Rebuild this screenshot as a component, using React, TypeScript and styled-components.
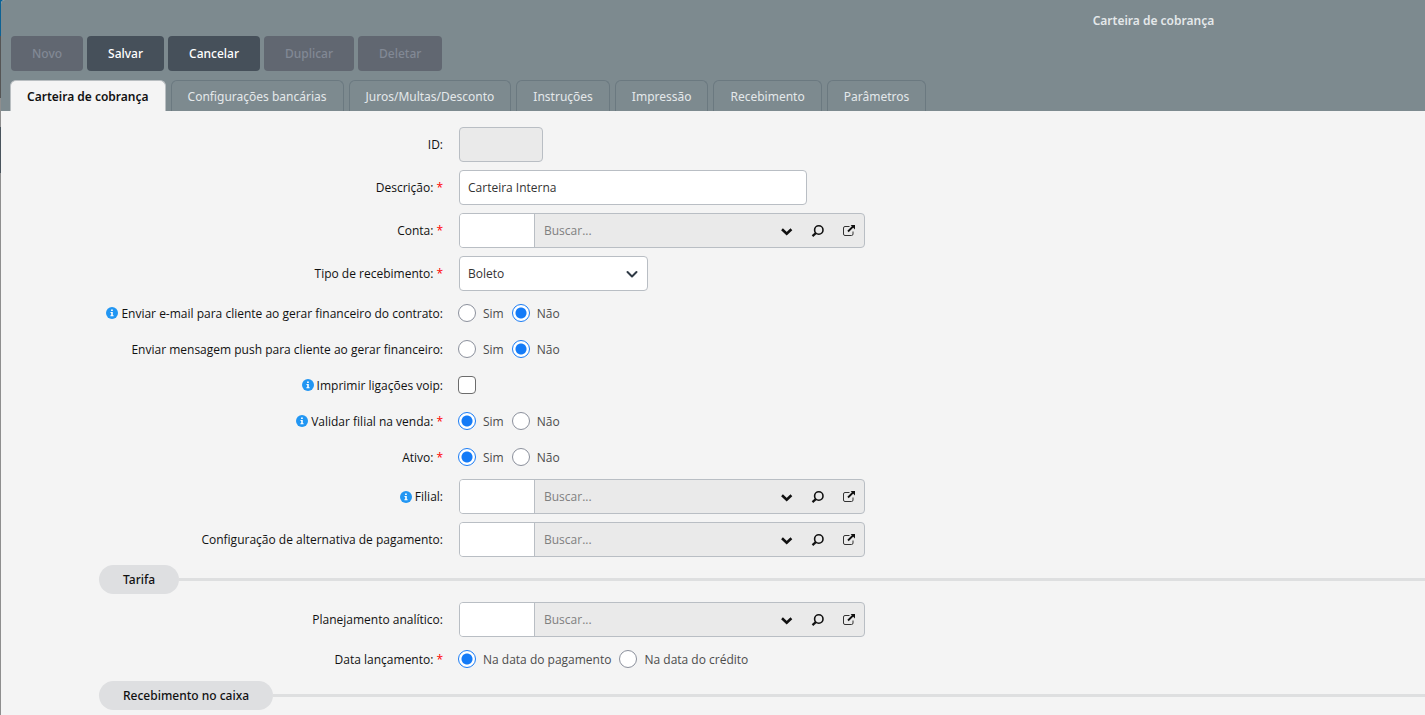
import React, { useId, useState } from 'react';
import styled, { createGlobalStyle, css } from 'styled-components';

const Global = createGlobalStyle`
  *, *::before, *::after { box-sizing: border-box; }
  body {
    margin: 0;
    background: #8e8e8e;
    font-family: "Open Sans", "Noto Sans", sans-serif;
    font-size: 12px;
    line-height: 17px;
    color: #111;
  }
  button, input, select { font: inherit; }
`;

const notoSans = css`
  font-family: "Noto Sans", "Open Sans", sans-serif;
`;

const Backdrop = styled.div`
  min-height: 100vh;
  padding-left: 1px;
  background: linear-gradient(#0d6294 0 36px, #555 36px 98px, #8e8e8e 98px 127px, #48535c 127px 173px, #8e8e8e 173px);
`;

const Window = styled.main`
  min-height: 100vh;
  background: #f4f4f4;
  border-top-left-radius: 4px;
`;

const Header = styled.header`
  display: flex;
  flex-direction: column;
  background: #7d8a8f;
  border-top-left-radius: 4px;
`;

const Title = styled.h1`
  ${notoSans}
  margin: 0;
  padding: 12px 2px 7px 62%;
  font-size: 12px;
  line-height: 17px;
  font-weight: 600;
  text-align: center;
  color: #e4e8ea;
`;

const Toolbar = styled.div`
  display: flex;
  gap: 4px;
  padding: 0 10px 9px;
`;

const ToolButton = styled.button`
  ${notoSans}
  height: 35px;
  padding: 0 21px;
  border: 0;
  border-radius: 4px;
  background: #46505a;
  color: #fff;
  font-weight: 500;
  &:disabled {
    background: #616771;
    color: #828995;
  }
`;

const Tabs = styled.nav`
  display: flex;
  gap: 5px;
  padding: 0 9px;
`;

const Tab = styled.button<{ $active: boolean }>`
  ${notoSans}
  height: 31px;
  padding: 0 16px;
  border: 1px solid #6b7980;
  border-bottom: 0;
  border-radius: 6px 6px 0 0;
  background: transparent;
  color: #e4e8ea;
  ${p => p.$active && css`
    background: #f4f4f4;
    border-color: #b9bec1;
    color: #111;
    font-weight: 600;
  `}
`;

const Form = styled.form`
  display: flex;
  flex-direction: column;
  gap: 8px;
  padding: 16px 0 5px;
`;

const Row = styled.div`
  display: grid;
  grid-template-columns: 442px 1fr;
  gap: 15px;
  align-items: center;
  min-height: 28px;
`;

const LabelCell = styled.div`
  display: flex;
  justify-content: flex-end;
  align-items: center;
  gap: 3px;
`;

const Star = styled.span`
  color: #f00;
`;

const field = css`
  height: 35px;
  margin: 0 0 0 1px;
  border: 1px solid #b9bec4;
  border-radius: 4px;
  background: #fff;
  color: #333;
`;

const TextInput = styled.input<{ $width: number }>`
  ${field}
  display: block;
  width: ${p => p.$width}px;
  padding: 0 8px;
  outline: 0;
  &:disabled { background: #eaeaea; }
`;

const Lookup = styled.div`
  ${field}
  display: flex;
  align-items: center;
  width: 406px;
  padding-right: 7px;
  background: #eaeaea;
  overflow: hidden;
`;

const CodeInput = styled.input`
  width: 75px;
  height: 100%;
  padding: 0 8px;
  border: 0;
  border-right: 1px solid #b9bec4;
  background: #fff;
  outline: 0;
`;

const SearchInput = styled.input`
  flex: 1;
  min-width: 0;
  height: 100%;
  padding: 0 9px;
  border: 0;
  background: transparent;
  outline: 0;
  &::placeholder { color: #808080; opacity: 1; }
`;

const IconGroup = styled.div`
  display: flex;
  gap: 15px;
`;

const IconButton = styled.button`
  display: flex;
  padding: 0;
  border: 0;
  background: none;
  color: #111;
`;

const SelectWrap = styled.div`
  display: grid;
  align-items: center;
  width: 190px;
  > * { grid-area: 1 / 1; }
  > svg {
    justify-self: end;
    margin-right: 8px;
    pointer-events: none;
  }
`;

const Select = styled.select`
  ${field}
  appearance: none;
  padding: 0 8px;
  outline: 0;
`;

const Options = styled.div`
  display: flex;
  gap: 8px;
`;

const Option = styled.label`
  display: flex;
  align-items: center;
  gap: 7px;
  color: #4c4c4c;
`;

const Radio = styled.input`
  appearance: none;
  width: 18px;
  height: 18px;
  margin: 0;
  border: 1px solid #8b909c;
  border-radius: 50%;
  background: #fff;
  &:checked {
    border-color: #1a7cf5;
    background: radial-gradient(circle, #147bf7 0 5px, #fff 6px);
  }
`;

const Check = styled.input`
  appearance: none;
  display: block;
  width: 18px;
  height: 18px;
  margin: 0;
  border: 1px solid #6c6c6c;
  border-radius: 4px;
  background: #fff;
  &:checked { background: #147bf7; }
`;

const Section = styled.div`
  display: flex;
  align-items: center;
  padding-left: 98px;
  &::after {
    content: "";
    flex: 1;
    height: 3px;
    background: #dedfe0;
  }
`;

const SectionTitle = styled.h2`
  ${notoSans}
  margin: 0;
  padding: 0 24px;
  border-radius: 15px;
  background: #dedfe1;
  font-size: 12px;
  font-weight: 500;
  line-height: 29px;
`;

const InfoIcon = () => (
  <svg width="12" height="12" viewBox="0 0 12 12" aria-hidden="true">
    <circle cx="6" cy="6" r="6" fill="#2196f3" />
    <path d="M5.1 2.5h1.7V4H5.1zM4.5 5h2.3v3.2h.8v1H4.4v-1h.8V6h-.7z" fill="#fff" />
  </svg>
);

const ChevronBold = () => (
  <svg width="16" height="16" viewBox="0 0 16 16" fill="none" stroke="currentColor" strokeWidth="2.6">
    <path d="M3 6.2 7.7 10.6 12.4 6.2" />
  </svg>
);

const Magnifier = () => (
  <svg width="16" height="16" viewBox="0 0 16 16" fill="none" stroke="currentColor">
    <circle cx="8.8" cy="7" r="4.2" strokeWidth="1.6" />
    <path d="m5.8 10.1-3.3 3" strokeWidth="2.2" />
  </svg>
);

const OpenExternal = () => (
  <svg width="16" height="16" viewBox="0 0 16 16" fill="none" stroke="currentColor">
    <path d="M8.5 3.5H4A1.5 1.5 0 0 0 2.5 5v6A1.5 1.5 0 0 0 4 12.5h6.5A1.5 1.5 0 0 0 12 11V8.5" strokeWidth="1" stroke="#333" />
    <path d="m7 8.5 5.5-5.5" strokeWidth="1.8" />
    <path d="M9.6 2H14v4.4z" fill="currentColor" stroke="none" />
  </svg>
);

const ChevronThin = () => (
  <svg width="16" height="16" viewBox="0 0 16 16" fill="none" stroke="#2f3a45" strokeWidth="2" strokeLinecap="round" strokeLinejoin="round">
    <path d="M3.5 6 8 10.5 12.5 6" />
  </svg>
);

type LabelProps = { text: string; required?: boolean; info?: boolean };

function Label({ text, required, info, htmlFor, id }: LabelProps & { htmlFor?: string; id?: string }) {
  return (
    <LabelCell>
      {info && <InfoIcon />}
      <label htmlFor={htmlFor} id={id}>{text}:</label>
      {required && <Star>*</Star>}
    </LabelCell>
  );
}

function TextRow({ width, value, disabled, ...label }: LabelProps & { width: number; value?: string; disabled?: boolean }) {
  const id = useId();
  return (
    <Row>
      <Label {...label} htmlFor={id} />
      <TextInput id={id} $width={width} defaultValue={value} disabled={disabled} />
    </Row>
  );
}

function LookupRow(label: LabelProps) {
  const id = useId();
  return (
    <Row>
      <Label {...label} htmlFor={id} />
      <Lookup>
        <CodeInput id={id} />
        <SearchInput placeholder="Buscar..." aria-label={label.text} />
        <IconGroup>
          <IconButton type="button" aria-label="Abrir lista"><ChevronBold /></IconButton>
          <IconButton type="button" aria-label="Pesquisar"><Magnifier /></IconButton>
          <IconButton type="button" aria-label="Abrir cadastro"><OpenExternal /></IconButton>
        </IconGroup>
      </Lookup>
    </Row>
  );
}

function RadioRow({ options, selected, ...label }: LabelProps & { options: string[]; selected: number }) {
  const id = useId();
  return (
    <Row>
      <Label {...label} id={id} />
      <Options role="radiogroup" aria-labelledby={id}>
        {options.map((o, i) => (
          <Option key={o}>
            <Radio type="radio" name={id} defaultChecked={i === selected} />
            {o}
          </Option>
        ))}
      </Options>
    </Row>
  );
}

const TABS = ['Carteira de cobrança', 'Configurações bancárias', 'Juros/Multas/Desconto', 'Instruções', 'Impressão', 'Recebimento', 'Parâmetros'];
const YES_NO = ['Sim', 'Não'];

export default function App() {
  const [tab, setTab] = useState(0);
  return (
    <Backdrop>
      <Global />
      <Window>
        <Header>
          <Title>Carteira de cobrança</Title>
          <Toolbar>
            <ToolButton disabled>Novo</ToolButton>
            <ToolButton>Salvar</ToolButton>
            <ToolButton>Cancelar</ToolButton>
            <ToolButton disabled>Duplicar</ToolButton>
            <ToolButton disabled>Deletar</ToolButton>
          </Toolbar>
          <Tabs>
            {TABS.map((t, i) => (
              <Tab key={t} $active={i === tab} onClick={() => setTab(i)}>{t}</Tab>
            ))}
          </Tabs>
        </Header>
        <Form>
          <TextRow text="ID" width={84} disabled />
          <TextRow text="Descrição" required width={348} value="Carteira Interna" />
          <LookupRow text="Conta" required />
          <Row>
            <Label text="Tipo de recebimento" required htmlFor="tipo" />
            <SelectWrap>
              <Select id="tipo"><option>Boleto</option></Select>
              <ChevronThin />
            </SelectWrap>
          </Row>
          <RadioRow info text="Enviar e-mail para cliente ao gerar financeiro do contrato" options={YES_NO} selected={1} />
          <RadioRow text="Enviar mensagem push para cliente ao gerar financeiro" options={YES_NO} selected={1} />
          <Row>
            <Label info text="Imprimir ligações voip" htmlFor="voip" />
            <Check type="checkbox" id="voip" />
          </Row>
          <RadioRow info text="Validar filial na venda" required options={YES_NO} selected={0} />
          <RadioRow text="Ativo" required options={YES_NO} selected={0} />
          <LookupRow info text="Filial" />
          <LookupRow text="Configuração de alternativa de pagamento" />
          <Section><SectionTitle>Tarifa</SectionTitle></Section>
          <LookupRow text="Planejamento analítico" />
          <RadioRow text="Data lançamento" required options={['Na data do pagamento', 'Na data do crédito']} selected={0} />
          <Section><SectionTitle>Recebimento no caixa</SectionTitle></Section>
        </Form>
      </Window>
    </Backdrop>
  );
}
